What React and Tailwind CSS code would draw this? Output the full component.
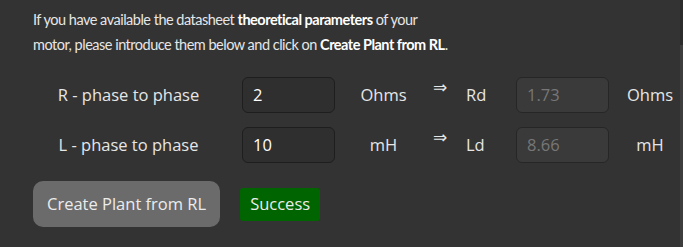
import React from "react";

function Row({ label, value, unit, label2, value2, unit2 }) {
  return (
    <div className="flex items-center h-[36px] pl-[33px]">
      <div className="w-[191px] text-center">{label}</div>
      <div className="w-[129px] flex justify-center">
        <div className="w-[93px] h-[36px] rounded-[6px] border border-[#1e1e1e] bg-[#2f2f2f] flex items-center pl-[10px] text-white">
          {value}
        </div>
      </div>
      <div className="w-[61px] text-center">{unit}</div>
      <div
        className="w-[52px] text-center text-[17px] -translate-y-[7px]"
        style={{ fontFamily: "'DejaVu Sans', sans-serif" }}
      >
        ⇒
      </div>
      <div className="w-[50px] text-left">{label2}</div>
      <div className="w-[93px] h-[36px] rounded-[6px] border border-[#262626] bg-[#3a3a3a] flex items-center pl-[10px] text-[#777777]">
        {value2}
      </div>
      <div className="w-[60px] ml-[11px] text-center">{unit2}</div>
    </div>
  );
}

export default function App() {
  return (
    <div
      className="w-[683px] h-[247px] bg-[#333333] text-[#e6e6e6] flex overflow-hidden text-[16.5px]"
      style={{ fontFamily: "'Open Sans', Lato, sans-serif" }}
    >
      <div className="flex-1 flex flex-col">
        <p
          className="pl-[33px] pt-[7px] leading-[25px] w-[640px] text-[14.5px] tracking-[-0.5px]"
          style={{ fontFamily: "Lato, sans-serif" }}
        >
          If you have available the datasheet <b className="font-bold text-white">theoretical parameters</b> of your
          <br />
          motor, please introduce them below and click on <b className="font-bold text-white">Create Plant from RL</b>.
        </p>
        <div className="mt-[20px] flex flex-col gap-[14px]">
          <Row label="R - phase to phase" value="2" unit="Ohms" label2="Rd" value2="1.73" unit2="Ohms" />
          <Row label="L - phase to phase" value="10" unit="mH" label2="Ld" value2="8.66" unit2="mH" />
        </div>
        <div className="mt-[18px] pl-[33px] flex items-center gap-[20px]">
          <button className="h-[46px] px-[14px] rounded-[10px] bg-[#6b6b6b] text-[#ececec]">
            Create Plant from RL
          </button>
          <div className="h-[33px] px-[10px] rounded-[3px] bg-[#006400] text-[#ececec] flex items-center">
            Success
          </div>
        </div>
      </div>
      <div className="w-[3px] flex flex-col">
        <div className="h-[45px] bg-[#2b2b2b]" />
        <div className="flex-1 bg-[#3d3d3d]" />
      </div>
    </div>
  );
}
